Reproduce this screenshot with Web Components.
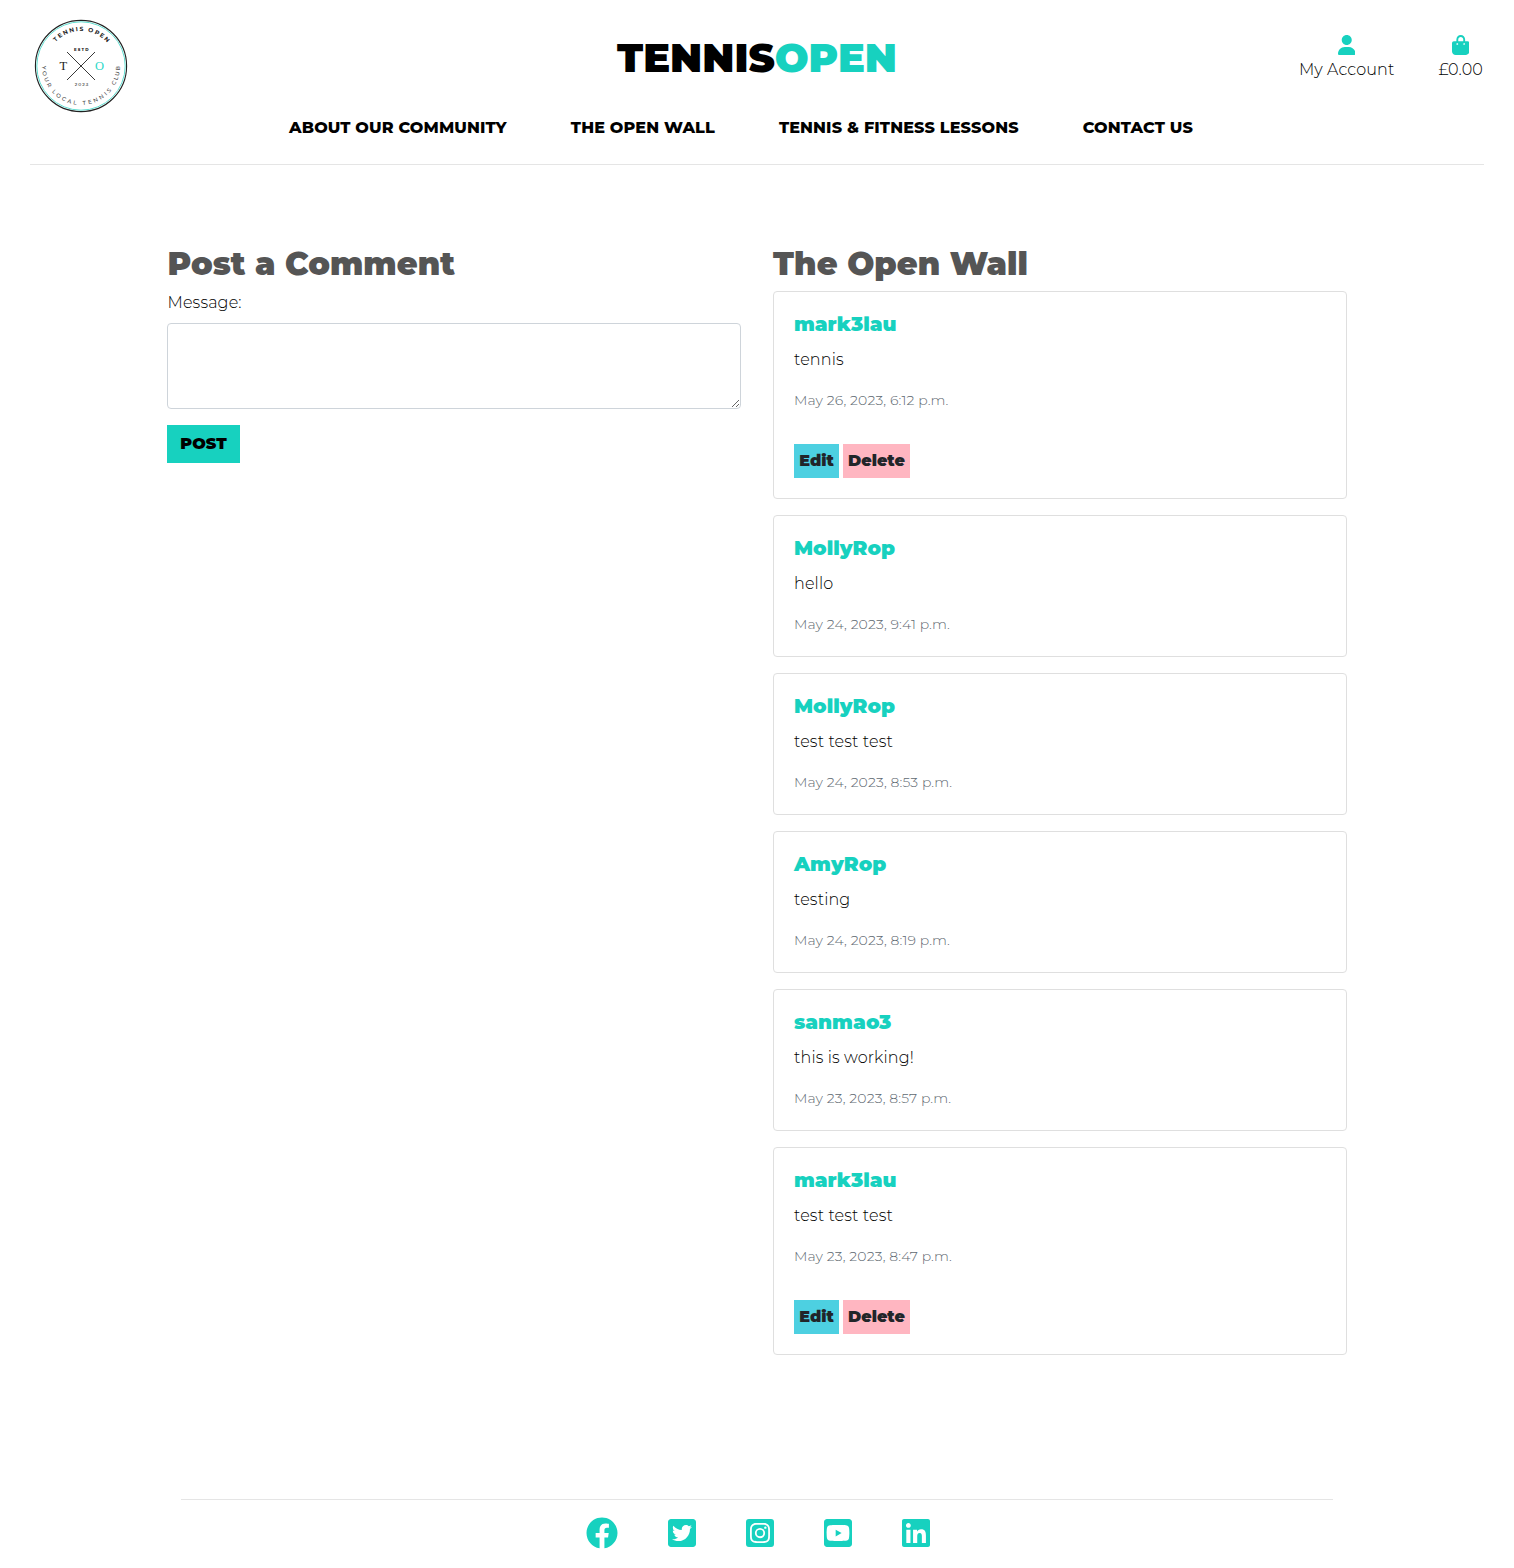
<!DOCTYPE html>
<html lang="en">
<head>
<meta charset="utf-8">
<title>Tennis Open</title>
<style>
html,body{margin:0;padding:0;background:#fff}
body{font-family:Montserrat,Inter,"Liberation Sans",sans-serif;font-weight:300;font-size:16px;line-height:24px;color:#000;--teal:#17d1bf;--track:.13px}
</style>
</head>
<body>
<open-page></open-page>
<script>
const define = (name, html) => customElements.define(name, class extends HTMLElement {
  connectedCallback() {
    if (this.shadowRoot) return;
    const root = this.attachShadow({ mode: 'open' });
    const t = document.createElement('template');
    t.innerHTML = typeof html === 'function' ? html(this) : html;
    root.appendChild(t.content.cloneNode(true));
  }
});

const ICONS = {
  user: [448, 'M224 256c70.7 0 128-57.31 128-128s-57.3-128-128-128C153.3 0 96 57.31 96 128S153.3 256 224 256zM274.7 304H173.3C77.61 304 0 381.6 0 477.3c0 19.14 15.52 34.67 34.66 34.67h378.7C432.5 512 448 496.5 448 477.3C448 381.6 370.4 304 274.7 304z'],
  bag: [448, 'M112 112C112 50.14 162.1 0 224 0C285.9 0 336 50.14 336 112V160H400C426.5 160 448 181.5 448 208V416C448 469 405 512 352 512H96C42.98 512 0 469 0 416V208C0 181.5 21.49 160 48 160H112V112zM160 160H288V112C288 76.65 259.3 48 224 48C188.7 48 160 76.65 160 112V160zM136 256C149.3 256 160 245.3 160 232C160 218.7 149.3 208 136 208C122.7 208 112 218.7 112 232C112 245.3 122.7 256 136 256zM312 208C298.7 208 288 218.7 288 232C288 245.3 298.7 256 312 256C325.3 256 336 245.3 336 232C336 218.7 325.3 208 312 208z'],
  facebook: [512, 'M504 256C504 119 393 8 256 8S8 119 8 256c0 123.78 90.69 226.38 209.25 245V327.69h-63V256h63v-54.64c0-62.15 37-96.48 93.67-96.48 27.14 0 55.52 4.84 55.52 4.84v61h-31.28c-30.8 0-40.41 19.12-40.41 38.73V256h68.78l-11 71.69h-57.78V501C413.31 482.38 504 379.78 504 256z'],
  twitter: [448, 'M400 32H48C21.5 32 0 53.5 0 80v352c0 26.5 21.5 48 48 48h352c26.5 0 48-21.5 48-48V80c0-26.5-21.5-48-48-48zm-48.9 158.8c.2 2.8.2 5.7.2 8.5 0 86.7-66 186.6-186.6 186.6-37.2 0-71.7-10.8-100.7-29.4 5.3.6 10.4.8 15.8.8 30.7 0 58.9-10.4 81.4-28-28.8-.6-53-19.5-61.3-45.5 10.1 1.5 19.2 1.5 29.6-1.2-30-6.1-52.5-32.5-52.5-64.4v-.8c8.7 4.9 18.9 7.9 29.6 8.3a65.447 65.447 0 0 1-29.2-54.6c0-12.2 3.2-23.4 8.9-33.1 32.3 39.8 80.8 65.8 135.2 68.6-9.3-44.5 24-80.6 64-80.6 18.9 0 35.9 7.9 47.9 20.7 14.8-2.8 29-8.3 41.6-15.8-4.9 15.2-15.2 28-28.8 36.1 13.2-1.4 26-5.1 37.8-10.2-8.9 13.1-20.1 24.7-32.9 34z'],
  instagram: [448, 'M224,202.66A53.34,53.34,0,1,0,277.36,256,53.38,53.38,0,0,0,224,202.66Zm124.71-41a54,54,0,0,0-30.41-30.41c-21-8.29-71-6.43-94.3-6.43s-73.25-1.93-94.31,6.43a54,54,0,0,0-30.41,30.41c-8.28,21-6.43,71.05-6.43,94.33S91,329.26,99.32,350.33a54,54,0,0,0,30.41,30.41c21,8.29,71,6.43,94.31,6.43s73.24,1.93,94.3-6.43a54,54,0,0,0,30.41-30.41c8.35-21,6.43-71.05,6.43-94.33S357.1,182.74,348.75,161.67ZM224,338a82,82,0,1,1,82-82A81.9,81.9,0,0,1,224,338Zm85.38-148.3a19.14,19.14,0,1,1,19.13-19.14A19.1,19.1,0,0,1,309.42,189.74ZM400,32H48A48,48,0,0,0,0,80V432a48,48,0,0,0,48,48H400a48,48,0,0,0,48-48V80A48,48,0,0,0,400,32ZM382.88,322c-1.29,25.63-7.14,48.34-25.85,67s-41.4,24.63-67,25.85c-26.41,1.49-105.59,1.49-132,0-25.63-1.29-48.26-7.15-67-25.85s-24.63-41.42-25.85-67c-1.49-26.42-1.49-105.61,0-132,1.29-25.63,7.07-48.34,25.85-67s41.47-24.56,67-25.78c26.41-1.49,105.59-1.49,132,0,25.63,1.29,48.33,7.15,67,25.85s24.63,41.42,25.85,67.05C384.37,216.44,384.37,295.56,382.88,322Z'],
  youtube: [448, 'M186.8 202.1l95.2 54.1-95.2 54.1V202.1zM448 80v352c0 26.5-21.5 48-48 48H48c-26.5 0-48-21.5-48-48V80c0-26.5 21.5-48 48-48h352c26.5 0 48 21.5 48 48zm-42 176.3s0-59.6-7.6-88.2c-4.2-15.8-16.5-28.2-32.2-32.4C337.9 128 224 128 224 128s-113.9 0-142.2 7.7c-15.7 4.2-28 16.6-32.2 32.4-7.6 28.5-7.6 88.2-7.6 88.2s0 59.6 7.6 88.2c4.2 15.8 16.5 27.7 32.2 31.9C110.1 384 224 384 224 384s113.9 0 142.2-7.7c15.7-4.2 28-16.1 32.2-31.9 7.6-28.5 7.6-88.1 7.6-88.1z'],
  linkedin: [448, 'M416 32H31.9C14.3 32 0 46.5 0 64.3v383.4C0 465.5 14.3 480 31.9 480H416c17.6 0 32-14.5 32-32.3V64.3c0-17.8-14.4-32.3-32-32.3zM135.4 416H69V202.2h66.5V416zm-33.2-243c-21.3 0-38.5-17.3-38.5-38.5S80.9 96 102.2 96c21.2 0 38.5 17.3 38.5 38.5 0 21.3-17.2 38.5-38.5 38.5zm282.1 243h-66.4V312c0-24.8-.5-56.7-34.5-56.7-34.6 0-39.9 27-39.9 54.9V416h-66.4V202.2h63.7v29.2h.9c8.9-16.8 30.6-34.5 62.2-34.5 66.5 0 78.9 43.8 78.9 101v117.1z']
};

define('open-page', `
<style>:host{display:flex;flex-direction:column;width:1514px;height:1568px;overflow:hidden}
.cols{display:flex;gap:32px;padding:80px 167px 0;flex:1}
.cols>*{flex:1}</style>
<site-header></site-header>
<main class="cols"><comment-form></comment-form><comment-wall></comment-wall></main>
<site-footer></site-footer>`);

define('site-header', `
<style>:host{display:flex;flex-direction:column;height:165px;box-sizing:border-box;margin:0 30px;border-bottom:1px solid #e5e5e5}
.top{display:grid;grid-template-columns:1fr auto 1fr;height:116px}
.brand{font-size:40px;font-weight:900;line-height:48px;padding-top:34px}
.brand b{font-weight:900;color:var(--teal)}
.tools{display:flex;justify-content:flex-end;gap:44px;padding:35px 1px 0 0}
nav{display:flex;gap:64px;margin-left:259px;font-weight:800;white-space:nowrap;letter-spacing:var(--track)}
club-logo{margin:19px 0 0 4px}</style>
<div class="top"><club-logo></club-logo>
<div class="brand">TENNIS<b>OPEN</b></div>
<div class="tools"><tool-link icon="user">My Account</tool-link><tool-link icon="bag">£0.00</tool-link></div></div>
<nav><span>ABOUT OUR COMMUNITY</span><span>THE OPEN WALL</span><span>TENNIS &amp; FITNESS LESSONS</span><span>CONTACT US</span></nav>`);

define('club-logo', `
<style>:host{display:block;width:94px;height:94px}svg{display:block}text{font-family:Montserrat,Inter,sans-serif}.low{font-size:5.6px;font-weight:500;fill:#444}.serif{font:12.5px "Liberation Serif",serif}</style>
<svg width="94" height="94" viewBox="34 19 94 94" fill="none">
<defs><path id="up" d="M46 66A35 35 0 0 1 116 66"/><path id="down" d="M42 66A39 39 0 0 0 120 66"/></defs>
<circle cx="81" cy="66" r="45.6" stroke="#222" stroke-width="1.1"/>
<circle cx="81" cy="66" r="44.2" stroke="#62dfd2" stroke-width="1"/>
<path d="M67 52l28 28M95 52L67 80" stroke="#222" stroke-width=".9"/>
<text font-size="6" font-weight="700" fill="#222"><textPath href="#up" startOffset="26.5" textLength="58">TENNIS OPEN</textPath></text>
<text class="low"><textPath href="#down" startOffset="0" textLength="23">YOUR</textPath></text>
<text class="low"><textPath href="#down" startOffset="28" textLength="28.5">LOCAL</textPath></text>
<text class="low"><textPath href="#down" startOffset="63" textLength="33">TENNIS</textPath></text>
<text class="low"><textPath href="#down" startOffset="102" textLength="20">CLUB</textPath></text>
<text x="74" y="50.8" font-size="4" font-weight="800" fill="#222" textLength="14.5">ESTD</text>
<text x="74.8" y="85.6" font-size="4.4" font-weight="500" fill="#222" textLength="13.5">2023</text>
<text class="serif" x="59.4" y="69.8" fill="#222">T</text>
<text class="serif" x="95" y="69.8" fill="#2bd8c8">O</text>
</svg>`);

define('ui-icon', h => {
  const [w, d] = ICONS[h.getAttribute('name')], s = +h.getAttribute('size');
  return `<style>:host{display:block;color:var(--teal)}svg{display:block}</style>
<svg width="${w / 512 * s}" height="${s}" viewBox="0 0 ${w} 512"><path fill="currentColor" d="${d}"/></svg>`;
});

define('tool-link', h => `
<style>:host{display:flex;flex-direction:column;align-items:center;gap:3px;white-space:nowrap;letter-spacing:var(--track)}</style>
<ui-icon name="${h.getAttribute('icon')}" size="20"></ui-icon><slot></slot>`);

define('section-title', `
<style>:host{display:block}h2{margin:0;font-size:32px;line-height:38px;height:46px;font-weight:900;color:#555}</style><h2><slot></slot></h2>`);

define('comment-form', `
<style>:host{display:block}
section-title,label{padding-left:.5px}
label{display:block;height:32px;letter-spacing:var(--track)}
textarea{display:block;box-sizing:border-box;width:574px;height:86px;border:1px solid #ced4da;border-radius:4px;margin:0 0 16px;background:#fff;padding:6px 12px}
button{display:flex;align-items:center;justify-content:center;width:73px;height:38px;border:0;padding:0;background:var(--teal);color:#000;font:inherit;font-weight:900}</style>
<section-title>Post a Comment</section-title>
<label>Message:</label>
<textarea></textarea>
<button>POST</button>`);

define('comment-wall', `
<style>:host{display:flex;flex-direction:column}.list{display:flex;flex-direction:column;gap:16px}</style>
<section-title>The Open Wall</section-title>
<div class="list">
<wall-card user="mark3lau" msg="tennis" when="May 26, 2023, 6:12 p.m." own></wall-card>
<wall-card user="MollyRop" msg="hello" when="May 24, 2023, 9:41 p.m."></wall-card>
<wall-card user="MollyRop" msg="test test test" when="May 24, 2023, 8:53 p.m."></wall-card>
<wall-card user="AmyRop" msg="testing" when="May 24, 2023, 8:19 p.m."></wall-card>
<wall-card user="sanmao3" msg="this is working!" when="May 23, 2023, 8:57 p.m."></wall-card>
<wall-card user="mark3lau" msg="test test test" when="May 23, 2023, 8:47 p.m." own></wall-card>
</div>`);

define('wall-card', h => `
<style>:host{display:block;border:1px solid #dfdfdf;border-radius:4px;padding:20px}
h5{margin:0 0 12px;font-size:20px;line-height:24px;height:24px;font-weight:900;color:var(--teal)}
p{margin:0 0 16px;height:24px;letter-spacing:var(--track)}
small{display:block;height:24px;font-size:14px;color:#5f6a72;letter-spacing:var(--track)}
.acts{display:flex;gap:4px;margin-top:32px}
.acts button{display:flex;align-items:center;justify-content:center;height:34px;border:0;padding:0;font:inherit;font-weight:900;color:#212529}
.e{width:45px;background:#4dd0e1}.d{width:67px;background:#ffb6c1}</style>
<h5>${h.getAttribute('user')}</h5><p>${h.getAttribute('msg')}</p><small>${h.getAttribute('when')}</small>
${h.hasAttribute('own') ? '<div class="acts"><button class="e">Edit</button><button class="d">Delete</button></div>' : ''}`);

define('site-footer', `
<style>:host{display:flex;gap:50px;box-sizing:border-box;height:69px;margin:0 181px;padding:17px 0 0 405px;border-top:1px solid #e5e5e5}</style>
<ui-icon name="facebook" size="32"></ui-icon><ui-icon name="twitter" size="32"></ui-icon><ui-icon name="instagram" size="32"></ui-icon><ui-icon name="youtube" size="32"></ui-icon><ui-icon name="linkedin" size="32"></ui-icon>`);
</script>
</body>
</html>
